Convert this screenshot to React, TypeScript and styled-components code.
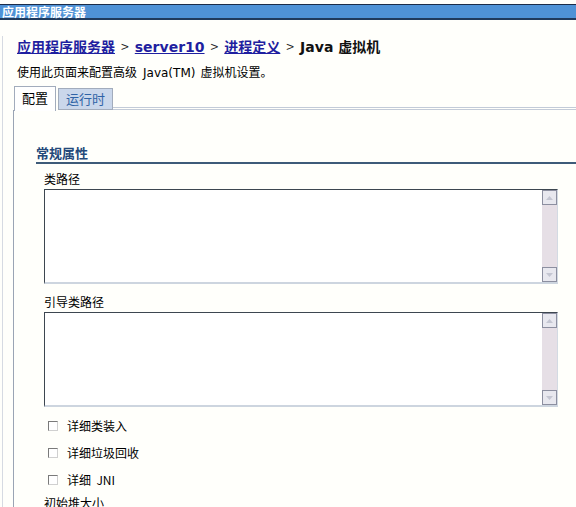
import styled, { createGlobalStyle } from 'styled-components';

const GlobalStyle = createGlobalStyle`
  html, body {
    margin: 0;
    padding: 0;
    background: #fffffb;
    overflow: hidden;
  }
  body {
    font-family: "Noto Sans CJK SC", "DejaVu Sans", sans-serif;
    font-size: 12px;
    color: #000;
  }
`;

const Page = styled.div`
  width: 576px;
  height: 507px;
  overflow: hidden;
  padding-top: 4px;
  box-sizing: border-box;
`;

const TitleBar = styled.div`
  height: 13px;
  line-height: 13px;
  background: #4f92d6;
  border-top: 1px solid #1b2c48;
  border-bottom: 2px solid #203a5c;
  color: #fff;
  font-weight: 700;
  font-size: 12px;
  padding-left: 2px;
  white-space: nowrap;
`;

const Content = styled.div`
  margin-left: 2px;
  border-left: 1px solid #d6dae2;
  padding-left: 10px;
`;

const Breadcrumb = styled.div`
  margin-top: 16px;
  padding-left: 4px;
  font-size: 14px;
  font-weight: 700;
  line-height: 20px;
  white-space: nowrap;
`;

const Crumb = styled.a`
  color: #1f1fa0;
  text-decoration: underline;
  font-family: "DejaVu Sans", "Noto Sans CJK SC", sans-serif;
`;

const Sep = styled.span`
  color: #222;
  margin: 0 6px;
  font-weight: 400;
`;

const Current = styled.span`
  color: #111;
  font-family: "DejaVu Sans", "Noto Sans CJK SC", sans-serif;
`;

const Description = styled.div`
  margin-top: 5px;
  padding-left: 4px;
  line-height: 20px;
  white-space: nowrap;
`;

const Latin = styled.span`
  font-family: "DejaVu Sans", sans-serif;
  margin: 0 5px 0 6px;
`;

const TabRow = styled.div`
  margin-top: 3px;
  display: flex;
  align-items: flex-end;
  height: 24px;
  padding-left: 1px;
`;

const Tab = styled.div<{ $active?: boolean }>`
  box-sizing: border-box;
  height: ${(p) => (p.$active ? '25px' : '22px')};
  line-height: ${(p) => (p.$active ? '22px' : '20px')};
  padding: 0 7px;
  margin-right: 2px;
  background: ${(p) => (p.$active ? '#ffffff' : '#cad7eb')};
  color: ${(p) => (p.$active ? '#000' : '#2f63a6')};
  border: 1px solid #a2acbc;
  border-bottom: ${(p) => (p.$active ? 'none' : '1px solid #a2acbc')};
  margin-bottom: ${(p) => (p.$active ? '-1px' : '0')};
  position: relative;
  font-size: 13px;
`;

const TabFiller = styled.div`
  flex: 1;
  border-bottom: 3px double #c3cbd8;
  margin-left: -2px;
`;

const TabPanel = styled.div`
  border-left: 1px solid #9aa4b4;
  padding: 35px 0 0 22px;
`;

const SectionTitle = styled.div`
  font-weight: 700;
  font-size: 13px;
  color: #24497a;
  line-height: 16px;
  border-bottom: 2px solid #3e5b79;
  padding-bottom: 1px;
`;

const Fields = styled.div`
  padding-left: 8px;
`;

const Label = styled.div<{ $gap?: number }>`
  margin-top: ${(p) => p.$gap ?? 0}px;
  line-height: 20px;
  font-size: 12px;
`;

const TextBox = styled.div`
  box-sizing: border-box;
  width: 514px;
  height: 95px;
  display: flex;
  border-top: 1px solid #3d4650;
  border-left: 1px solid #3d4650;
  border-right: 1px solid #d3dae3;
  border-bottom: 2px solid #cdd5df;
  background: #fff;
`;

const Area = styled.textarea`
  flex: 1;
  border: none;
  outline: none;
  resize: none;
  background: transparent;
  margin: 0;
  padding: 2px;
  font: inherit;
`;

const Scrollbar = styled.div`
  width: 15px;
  display: flex;
  flex-direction: column;
  justify-content: space-between;
  background: #e6dfe6;
`;

const ScrollButton = styled.div`
  box-sizing: border-box;
  height: 15px;
  border: 1px solid #8c8fa0;
  background: #e8e8ef;
  display: flex;
  align-items: center;
  justify-content: center;
`;

const CheckRow = styled.label<{ $first?: boolean }>`
  display: flex;
  align-items: center;
  height: 27px;
  margin-top: ${(p) => (p.$first ? '5px' : '0')};
  padding-left: 4px;
  gap: 9px;
  font-size: 12px;
  white-space: pre;
`;

const CheckBox = styled.span`
  box-sizing: border-box;
  width: 10px;
  height: 10px;
  border-top: 1px solid #7a7a7a;
  border-left: 1px solid #7a7a7a;
  border-right: 1px solid #d0d0d0;
  border-bottom: 1px solid #d0d0d0;
  background: #fff;
`;

function Arrow({ up }: { up?: boolean }) {
  return (
    <svg width="7" height="4" viewBox="0 0 7 4">
      <path d={up ? 'M0 4 L3.5 0 L7 4 Z' : 'M0 0 L3.5 4 L7 0 Z'} fill="#c4c6d2" />
    </svg>
  );
}

function ScrollTextBox() {
  return (
    <TextBox>
      <Area />
      <Scrollbar>
        <ScrollButton>
          <Arrow up />
        </ScrollButton>
        <ScrollButton>
          <Arrow />
        </ScrollButton>
      </Scrollbar>
    </TextBox>
  );
}

const checks = ['详细类装入', '详细垃圾回收', '详细  JNI'];

export default function App() {
  return (
    <>
      <GlobalStyle />
      <Page>
        <TitleBar>应用程序服务器</TitleBar>
        <Content>
          <Breadcrumb>
            <Crumb href="#">应用程序服务器</Crumb>
            <Sep>&gt;</Sep>
            <Crumb href="#">server10</Crumb>
            <Sep>&gt;</Sep>
            <Crumb href="#">进程定义</Crumb>
            <Sep>&gt;</Sep>
            <Current>Java 虚拟机</Current>
          </Breadcrumb>
          <Description>
            使用此页面来配置高级<Latin>Java(TM)</Latin>虚拟机设置。
          </Description>
          <TabRow>
            <Tab $active>配置</Tab>
            <Tab>运行时</Tab>
            <TabFiller />
          </TabRow>
          <TabPanel>
            <SectionTitle>常规属性</SectionTitle>
            <Fields>
              <Label $gap={5}>类路径</Label>
              <ScrollTextBox />
              <Label $gap={8}>引导类路径</Label>
              <ScrollTextBox />
              {checks.map((c, i) => (
                <CheckRow key={c} $first={i === 0}>
                  <CheckBox />
                  {c}
                </CheckRow>
              ))}
              <Label>初始堆大小</Label>
            </Fields>
          </TabPanel>
        </Content>
      </Page>
    </>
  );
}
